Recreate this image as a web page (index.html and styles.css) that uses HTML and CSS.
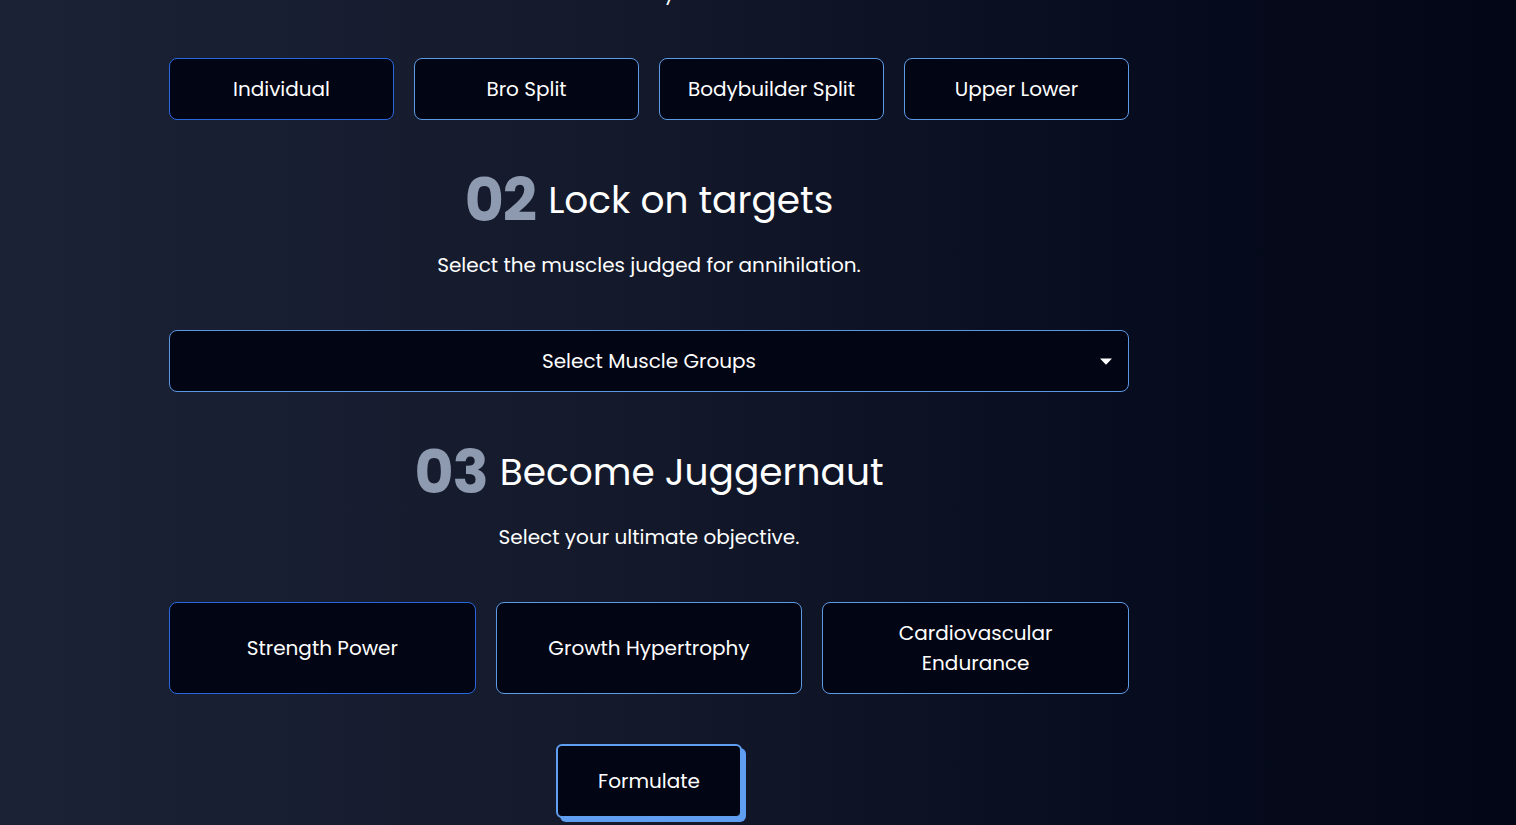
FILE: index.html
```html
<!DOCTYPE html>
<html lang="en">
<head>
<meta charset="utf-8">
<title>Workout Formulator</title>
<link rel="stylesheet" href="styles.css">
</head>
<body>
<div class="page">
  <main class="main">
    <section class="step step--first">
      <p class="step-sub step-sub--cut">Choose the scheme you will now train.</p>
      <div class="options options--4">
        <button class="opt opt--active">Individual</button>
        <button class="opt">Bro Split</button>
        <button class="opt">Bodybuilder Split</button>
        <button class="opt">Upper Lower</button>
      </div>
    </section>

    <section class="step">
      <h2 class="step-title"><span class="step-num">02</span><span class="step-name">Lock on targets</span></h2>
      <p class="step-sub">Select the muscles judged for annihilation.</p>
      <div class="select">
        <span class="select-spacer"></span>
        <span class="select-label">Select Muscle Groups</span>
        <svg class="select-caret" width="12" height="7" viewBox="0 0 12 7" aria-hidden="true"><path d="M0 0.5 H12 L6 6.8 Z" fill="#ffffff"/></svg>
      </div>
    </section>

    <section class="step">
      <h2 class="step-title"><span class="step-num">03</span><span class="step-name">Become Juggernaut</span></h2>
      <p class="step-sub">Select your ultimate objective.</p>
      <div class="options options--3">
        <button class="opt opt--tall opt--active">Strength Power</button>
        <button class="opt opt--tall">Growth Hypertrophy</button>
        <button class="opt opt--tall">Cardiovascular<br>Endurance</button>
      </div>
    </section>

    <div class="actions">
      <button class="formulate">Formulate</button>
    </div>
  </main>
  <aside class="side"></aside>
</div>
</body>
</html>
```

FILE: styles.css
```css
* { box-sizing: border-box; }

html, body {
  margin: 0;
  padding: 0;
}

body {
  font-family: "Poppins", "Inter", "Noto Sans", sans-serif;
  color: #ffffff;
  background: linear-gradient(to right, #1b2236 0%, #141a2b 40%, #070c1e 75%, #030616 100%);
  min-height: 100vh;
  overflow: hidden;
}

.page {
  display: flex;
  width: 100%;
  min-height: 100vh;
}

.main {
  flex: 0 0 1298px;
  display: flex;
  flex-direction: column;
  align-items: center;
}

.side {
  flex: 1 1 auto;
}

.step {
  width: 960px;
  display: flex;
  flex-direction: column;
  align-items: center;
  margin-bottom: 50px;
}

.step--first {
  margin-top: -22px;
}

.step-title {
  margin: 0;
  display: flex;
  align-items: center;
  gap: 12px;
  height: 60px;
  font-weight: 400;
}

.step-num {
  font-size: 60px;
  line-height: 60px;
  font-weight: 700;
  color: #8e9ab0;
  letter-spacing: -1px;
}

.step-name {
  font-size: 37.5px;
  line-height: 48px;
  font-weight: 400;
  color: #ffffff;
}

.step-sub {
  margin: 20px 0 50px;
  font-size: 20px;
  line-height: 30px;
  color: #ffffff;
  text-align: center;
}

.step-sub--cut {
  margin-top: 0;
}

.options {
  width: 100%;
  display: grid;
  gap: 20px;
}

.options--4 { grid-template-columns: repeat(4, 1fr); }
.options--3 { grid-template-columns: repeat(3, 1fr); }

.opt {
  font-family: inherit;
  font-size: 20px;
  line-height: 30px;
  color: #ffffff;
  background: #020514;
  border: 1px solid #5c9ae6;
  border-radius: 8px;
  padding: 15px 10px;
  height: 62px;
  cursor: pointer;
}

.opt--active {
  border-color: #2a67de;
}

.opt--tall {
  height: auto;
  padding: 15px 10px;
}

.select {
  width: 100%;
  height: 62px;
  display: grid;
  grid-template-columns: 1fr auto 1fr;
  align-items: center;
  background: #020514;
  border: 1px solid #5a96e2;
  border-radius: 8px;
  padding: 0 16px;
  font-size: 20px;
  line-height: 30px;
}

.select-caret {
  justify-self: end;
  display: block;
  margin-top: 1px;
}

.actions {
  display: flex;
  justify-content: center;
}

.formulate {
  font-family: inherit;
  font-size: 20px;
  line-height: 30px;
  color: #ffffff;
  background: #020514;
  border: 2px solid #5f9ef0;
  border-radius: 6px;
  padding: 20px 40px;
  box-shadow: 4px 4px 0 #5f9ef0;
  cursor: pointer;
}
```
